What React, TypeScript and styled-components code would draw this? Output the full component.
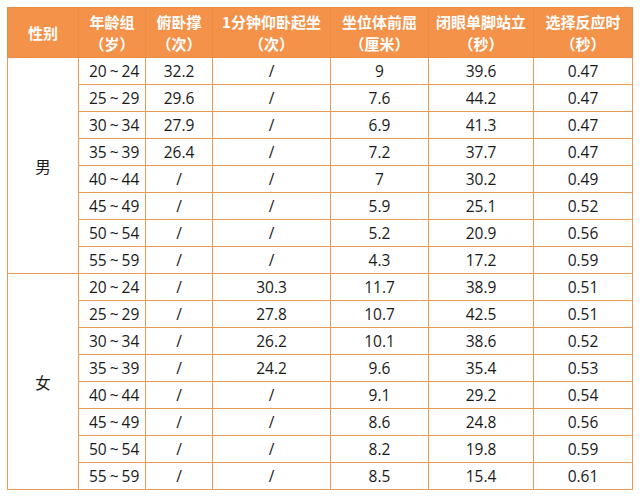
import styled, { createGlobalStyle } from 'styled-components';

const GlobalStyle = createGlobalStyle`
    html, body {
        margin: 0;
        padding: 0;
        background: #ffffff;
    }
    body {
        font-family: 'Open Sans', 'Noto Sans CJK SC', sans-serif;
    }
`;

const Page = styled.div`
    padding: 7px 0 0 7px;
`;

const Table = styled.table`
    border-collapse: collapse;
    table-layout: fixed;
    width: 626px;
    color: #1a1a1a;
`;

const HeadCell = styled.th`
    background-color: #f4924a;
    color: #ffffff;
    border: 1px solid #e98c45;
    height: 49px;
    padding: 0;
    font-family: 'Noto Sans CJK SC', sans-serif;
    font-weight: 700;
    font-size: 15px;
    line-height: 22px;
    text-align: center;
    vertical-align: middle;
`;

const Cell = styled.td<{ $left?: boolean }>`
    border: 1px solid #eb9a55;
    height: 26px;
    padding: ${(p) => (p.$left ? '0 0 0 10px' : '0')};
    font-size: 15.5px;
    text-align: ${(p) => (p.$left ? 'left' : 'center')};
    vertical-align: middle;
    white-space: nowrap;
`;

const GroupCell = styled.td`
    border: 1px solid #eb9a55;
    font-family: 'Noto Sans CJK SC', sans-serif;
    font-size: 15.5px;
    text-align: center;
    vertical-align: middle;
`;

const Tilde = styled.span`
    margin: 0 3px;
`;

const columns = [
    { title: '性别', width: 71 },
    { title: '年龄组', unit: '（岁）', width: 67 },
    { title: '俯卧撑', unit: '（次）', width: 67 },
    { title: '1分钟仰卧起坐', unit: '（次）', width: 118 },
    { title: '坐位体前屈', unit: '（厘米）', width: 98 },
    { title: '闭眼单脚站立', unit: '（秒）', width: 105 },
    { title: '选择反应时', unit: '（秒）', width: 99 },
];

const ages = ['20', '24', '25', '29', '30', '34', '35', '39', '40', '44', '45', '49', '50', '54', '55', '59'];

const groups = [
    {
        sex: '男',
        rows: [
            ['32.2', '/', '9', '39.6', '0.47'],
            ['29.6', '/', '7.6', '44.2', '0.47'],
            ['27.9', '/', '6.9', '41.3', '0.47'],
            ['26.4', '/', '7.2', '37.7', '0.47'],
            ['/', '/', '7', '30.2', '0.49'],
            ['/', '/', '5.9', '25.1', '0.52'],
            ['/', '/', '5.2', '20.9', '0.56'],
            ['/', '/', '4.3', '17.2', '0.59'],
        ],
    },
    {
        sex: '女',
        rows: [
            ['/', '30.3', '11.7', '38.9', '0.51'],
            ['/', '27.8', '10.7', '42.5', '0.51'],
            ['/', '26.2', '10.1', '38.6', '0.52'],
            ['/', '24.2', '9.6', '35.4', '0.53'],
            ['/', '/', '9.1', '29.2', '0.54'],
            ['/', '/', '8.6', '24.8', '0.56'],
            ['/', '/', '8.2', '19.8', '0.59'],
            ['/', '/', '8.5', '15.4', '0.61'],
        ],
    },
];

function App() {
    return (
        <Page>
            <GlobalStyle />
            <Table>
                <colgroup>
                    {columns.map((col) => (
                        <col key={col.title} style={{ width: col.width }} />
                    ))}
                </colgroup>
                <thead>
                    <tr>
                        {columns.map((col) => (
                            <HeadCell key={col.title}>
                                {col.title}
                                {col.unit && (
                                    <>
                                        <br />
                                        {col.unit}
                                    </>
                                )}
                            </HeadCell>
                        ))}
                    </tr>
                </thead>
                <tbody>
                    {groups.map((group) =>
                        group.rows.map((row, i) => (
                            <tr key={group.sex + i}>
                                {i === 0 && <GroupCell rowSpan={group.rows.length}>{group.sex}</GroupCell>}
                                <Cell $left>
                                    {ages[i * 2]}
                                    <Tilde>~</Tilde>
                                    {ages[i * 2 + 1]}
                                </Cell>
                                {row.map((value, j) => (
                                    <Cell key={j}>{value}</Cell>
                                ))}
                            </tr>
                        ))
                    )}
                </tbody>
            </Table>
        </Page>
    );
}

export default App;
